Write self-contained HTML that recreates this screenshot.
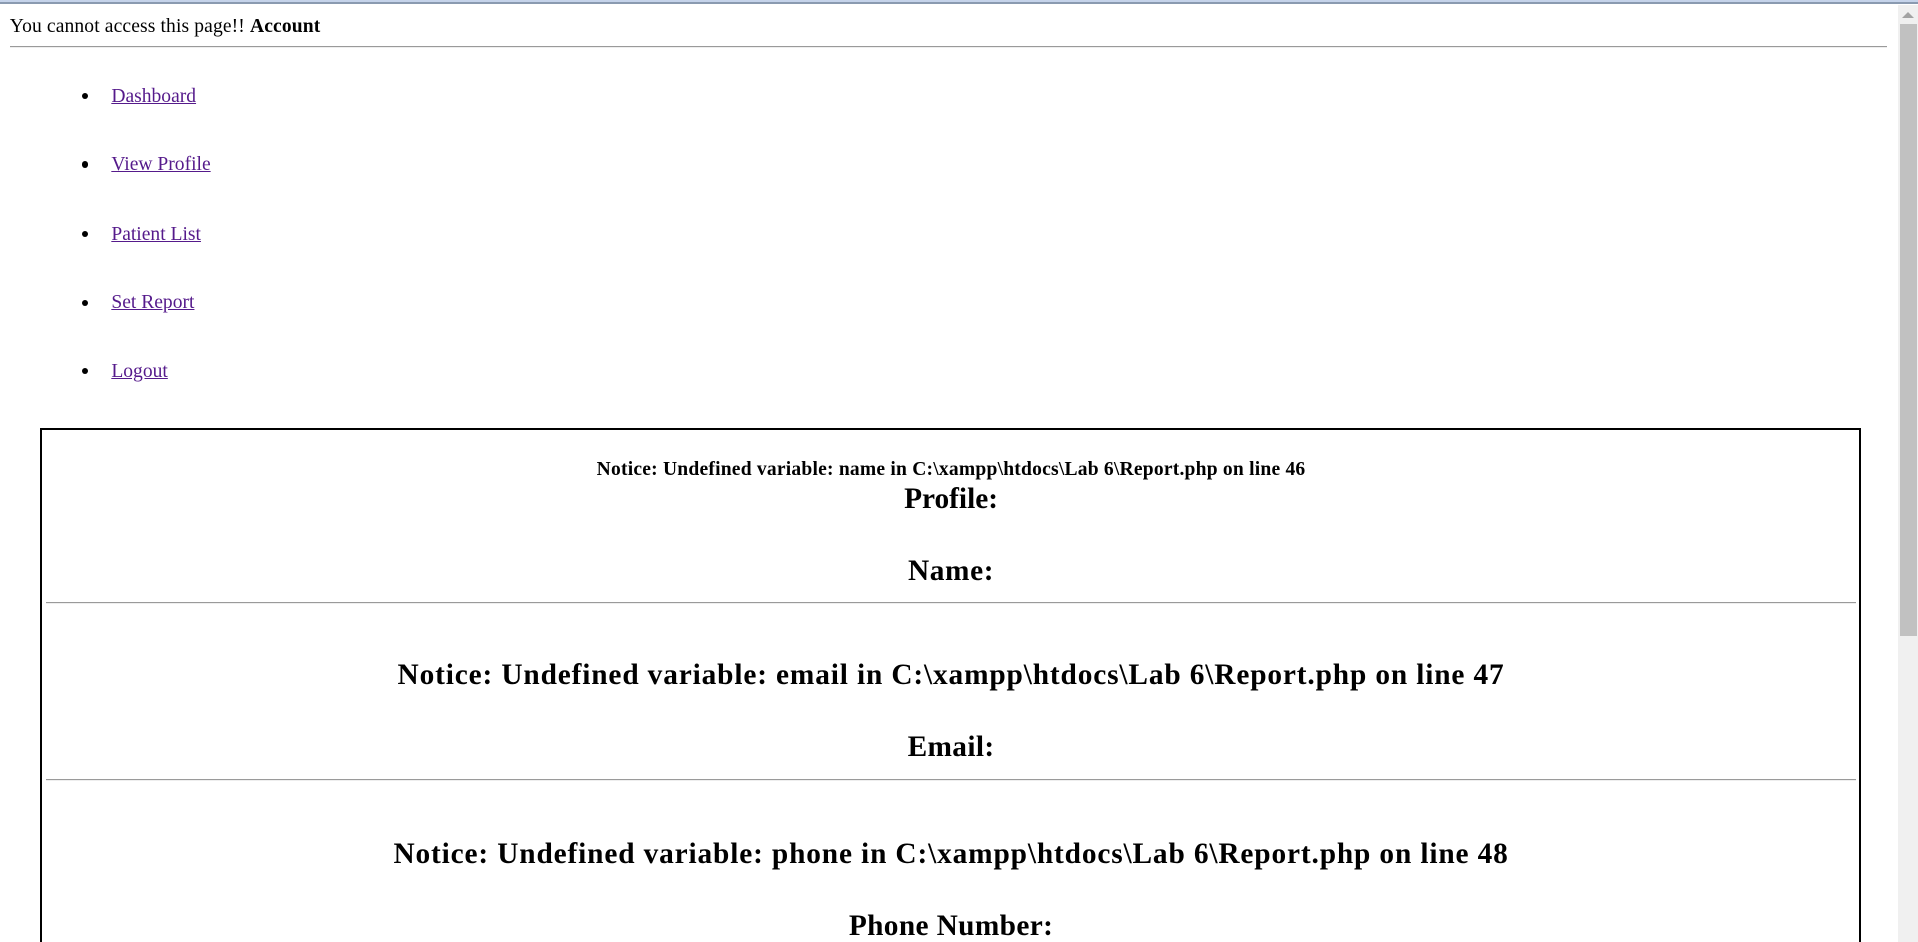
<!DOCTYPE html>
<html><head><meta charset="utf-8"><style>
html,body{margin:0;padding:0;overflow:hidden;background:#fff;width:1918px;height:942px}
#w{zoom:1.22322;position:relative;width:1568px;height:770px;overflow:hidden;font-family:"Liberation Serif",serif;color:#000}
.a{position:absolute;white-space:nowrap}
.t16{font-size:16px;line-height:18px}
.c{left:35px;width:1485px;text-align:center;font-weight:bold}
.b24{font-size:24px;line-height:28px}
.hr{position:absolute;height:0;border-top:1px solid #9a9a9a;border-bottom:1px solid #eee}
a{color:#551a8b;text-decoration:underline}
.dot{position:absolute;width:5px;height:5px;border-radius:50%;background:#000;left:67px}
</style></head><body><div id="w">
<div class="a" style="left:0;top:0;width:1568px;height:2px;background:#c5d3ea"></div>
<div class="a" style="left:0;top:2px;width:1568px;height:1px;background:#8a9ab0"></div>
<div class="a t16" style="left:8px;top:13px;letter-spacing:0.1px">You cannot access this page!! <b>Account</b></div>
<div class="hr" style="left:8px;top:38px;width:1535px"></div>

<div class="dot" style="top:76px"></div><div class="a t16" style="left:91px;top:70px"><a>Dashboard</a></div>
<div class="dot" style="top:132px"></div><div class="a t16" style="left:91px;top:126px"><a>View Profile</a></div>
<div class="dot" style="top:189px"></div><div class="a t16" style="left:91px;top:183px"><a>Patient List</a></div>
<div class="dot" style="top:245px"></div><div class="a t16" style="left:91px;top:239px"><a>Set Report</a></div>
<div class="dot" style="top:301px"></div><div class="a t16" style="left:91px;top:295px"><a>Logout</a></div>

<div class="a" style="left:33px;top:350px;width:1485px;height:500px;border:2px solid #000"></div>
<div class="a c t16" style="top:375px;letter-spacing:0.17px">Notice: Undefined variable: name in C:\xampp\htdocs\Lab 6\Report.php on line 46</div>
<div class="a c b24" style="top:394px">Profile:</div>
<div class="a c b24" style="top:453px;letter-spacing:0.5px">Name:</div>
<div class="hr" style="left:38px;top:492px;width:1479px"></div>
<div class="a c b24" style="top:538px;letter-spacing:0.7px">Notice: Undefined variable: email in C:\xampp\htdocs\Lab 6\Report.php on line 47</div>
<div class="a c b24" style="top:597px;letter-spacing:0.3px">Email:</div>
<div class="hr" style="left:38px;top:637px;width:1479px"></div>
<div class="a c b24" style="top:684px;letter-spacing:0.7px">Notice: Undefined variable: phone in C:\xampp\htdocs\Lab 6\Report.php on line 48</div>
<div class="a c b24" style="top:743px;letter-spacing:0.3px">Phone Number:</div>

<div class="a" style="left:1552px;top:4px;width:16px;height:766px;background:#f0f0f0"></div>
<div class="a" style="left:1555px;top:10px;width:0;height:0;border-left:5px solid transparent;border-right:5px solid transparent;border-bottom:5px solid #a3a3a3"></div>
<div class="a" style="left:1553px;top:20px;width:14px;height:500px;background:#c1c1c1"></div>
</div></body></html>
